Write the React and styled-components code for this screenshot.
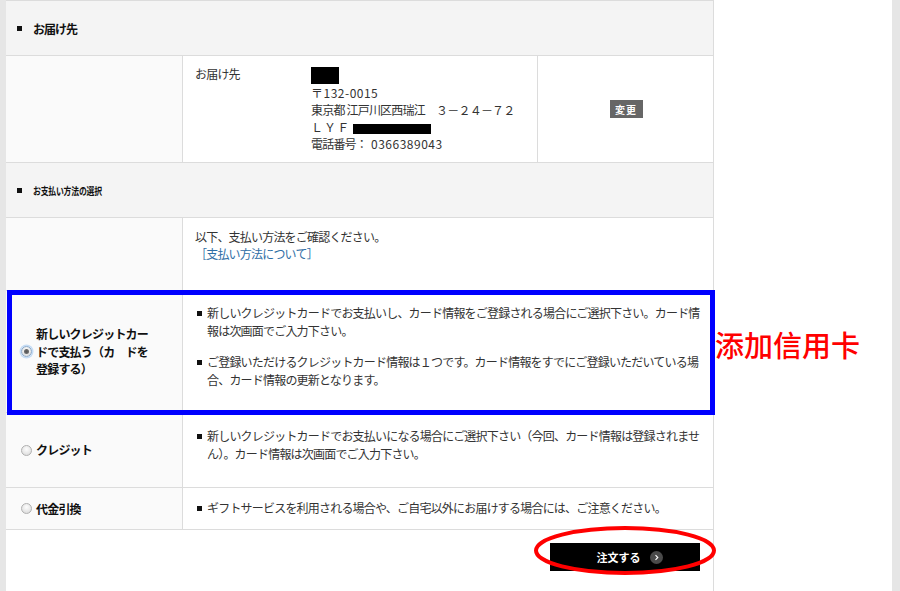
import React from "react";
import styled, { createGlobalStyle } from "styled-components";

const GlobalStyle = createGlobalStyle`
  *, *::before, *::after { box-sizing: border-box; }
  html, body { margin: 0; padding: 0; background: #fff; }
  body {
    font-family: "Noto Sans CJK JP", "Noto Sans", sans-serif;
    color: #333;
    font-size: 12px;
  }
`;

const Page = styled.div`
  display: flex;
  width: 900px;
  height: 591px;
  overflow: hidden;
  background: #fff;
`;

const SideStripe = styled.div`
  flex: 0 0 ${(p) => p.$w}px;
  background: #e6e6e6;
`;

const Gutter = styled.div`
  flex: 1;
  background: #fff;
`;

const Main = styled.main`
  flex: 0 0 708px;
  border-top: 1px solid #dcdcdc;
  border-right: 1px solid #dcdcdc;
  display: flex;
  flex-direction: column;
`;

const SectionHeader = styled.div`
  height: 55px;
  background: #f4f4f4;
  border-bottom: 1px solid #dcdcdc;
  display: flex;
  align-items: center;
  padding-left: 11px;
  gap: 11px;
`;

const Square = styled.span`
  flex: 0 0 5px;
  width: 5px;
  height: 5px;
  background: #111;
`;

const HeaderTitle = styled.span`
  display: inline-block;
  font-weight: bold;
  color: #111;
  font-size: ${(p) => (p.$compact ? 10.5 : 12)}px;
  letter-spacing: ${(p) => (p.$compact ? -0.3 : -1)}px;
  transform: ${(p) => (p.$compact ? "scaleX(0.75)" : "none")};
  transform-origin: left center;
`;

const Row = styled.div`
  position: relative;
  display: grid;
  grid-template-columns: ${(p) => p.$cols || "177px 1fr"};
  height: ${(p) => p.$h}px;
  border-bottom: 1px solid #dcdcdc;

  ${(p) =>
    p.$highlight &&
    `
    &::after {
      content: "";
      position: absolute;
      top: -1px;
      left: 1px;
      right: -2px;
      bottom: -3px;
      border: 5px solid #0000ff;
      z-index: 2;
      pointer-events: none;
    }
  `}
`;

const LabelCell = styled.div`
  background: #fafafa;
  border-right: 1px solid #dcdcdc;
  display: flex;
  align-items: center;
  padding-left: 15px;
`;

const ContentCell = styled.div`
  background: #fff;
  padding: ${(p) => p.$pt || 0}px 9px 0 12px;
  letter-spacing: -0.8px;
  line-height: ${(p) => p.$lh || 18}px;
  color: #333;
  ${(p) => p.$divider && "border-right: 1px solid #dcdcdc;"}
`;

const CenterCell = styled.div`
  display: flex;
  align-items: center;
  justify-content: center;
  background: #fff;
`;

const AddressGrid = styled.div`
  display: grid;
  grid-template-columns: 116px 1fr;
`;

const AddressLines = styled.div`
  display: flex;
  flex-direction: column;
`;

const Latin = styled.span`
  letter-spacing: 0.5px;
  margin-left: ${(p) => p.$ml || 0}px;
`;

const Redact = styled.span`
  display: inline-block;
  width: ${(p) => p.$w}px;
  height: ${(p) => p.$h}px;
  background: #000;
  vertical-align: middle;
  margin-left: ${(p) => p.$ml || 0}px;
`;

const SmallButton = styled.span`
  display: inline-flex;
  align-items: center;
  justify-content: center;
  width: 33px;
  height: 18px;
  background: #666;
  color: #fff;
  font-size: 10px;
  font-weight: bold;
  letter-spacing: 1px;
  margin-left: 1px;
`;

const Link = styled.a`
  color: #2f6ea5;
  text-decoration: none;
`;

const Radio = styled.span`
  position: relative;
  flex: 0 0 11px;
  width: 11px;
  height: 11px;
  border-radius: 50%;
  border: 1px solid ${(p) => (p.$checked ? "#8aa9c9" : "#b0b0b0")};
  background: radial-gradient(circle at 50% 35%, #fdfdfd 0%, #d6d6d6 100%);
  margin-right: 4px;
  box-shadow: ${(p) => (p.$checked ? "0 0 0 1.5px #c5dcf5" : "none")};

  &::after {
    content: "";
    display: ${(p) => (p.$checked ? "block" : "none")};
    position: absolute;
    inset: 2px;
    border-radius: 50%;
    background: radial-gradient(circle, #555 0%, #777 100%);
  }
`;

const OptionLabel = styled.span`
  width: ${(p) => (p.$wrap ? "118px" : "auto")};
  font-weight: bold;
  color: #111;
  font-size: 12px;
  letter-spacing: -0.8px;
  line-height: 17.5px;
`;

const BulletList = styled.ul`
  list-style: none;
  margin: 0;
  padding: 0;
  display: flex;
  flex-direction: column;
  gap: 13px;
`;

const BulletItem = styled.li`
  display: grid;
  grid-template-columns: 12px 1fr;
`;

const ItemBullet = styled.span`
  width: 5px;
  height: 5px;
  margin: 6.5px 0 0 2px;
  background: #111;
`;

const Annotation = styled.span`
  position: absolute;
  left: calc(100% + 2px);
  top: 39px;
  white-space: nowrap;
  font-family: "Noto Sans CJK SC", sans-serif;
  font-size: 29px;
  line-height: 29px;
  font-weight: 500;
  color: #ff0000;
  z-index: 3;
`;

const ButtonRow = styled.div`
  display: flex;
  justify-content: flex-end;
  padding: 13px 13px 0 0;
`;

const OrderButtonWrap = styled.div`
  position: relative;
`;

const OrderButton = styled.button`
  width: 150px;
  height: 28px;
  border: none;
  background: #000;
  color: #fff;
  font-family: "Noto Sans CJK JP", sans-serif;
  font-size: 11px;
  font-weight: bold;
  display: flex;
  align-items: center;
  justify-content: center;
  gap: 9px;
  padding: 0 0 0 9px;
  cursor: pointer;
`;

const ArrowCircle = styled.span`
  width: 13px;
  height: 13px;
  border-radius: 50%;
  background: #4a4a4a;
  display: inline-flex;
  align-items: center;
  justify-content: center;
`;

const Ellipse = styled.svg`
  position: absolute;
  left: -17px;
  top: -18px;
  pointer-events: none;
  overflow: visible;
`;

const payments = [
  {
    label: "新しいクレジットカードで支払う（カ　ドを登録する）",
    checked: true,
    wrap: true,
    highlight: true,
    h: 122,
    pt: 13,
    items: [
      "新しいクレジットカードでお支払いし、カード情報をご登録される場合にご選択下さい。カード情報は次画面でご入力下さい。",
      "ご登録いただけるクレジットカード情報は１つです。カード情報をすでにご登録いただいている場合、カード情報の更新となります。",
    ],
  },
  {
    label: "クレジット",
    h: 75,
    pt: 14,
    items: [
      "新しいクレジットカードでお支払いになる場合にご選択下さい（今回、カード情報は登録されません）。カード情報は次画面でご入力下さい。",
    ],
  },
  {
    label: "代金引換",
    h: 42,
    pt: 11,
    items: ["ギフトサービスを利用される場合や、ご自宅以外にお届けする場合には、ご注意ください。"],
  },
];

export default function App() {
  return (
    <>
      <GlobalStyle />
      <Page>
        <SideStripe $w={6} />
        <Main>
          <SectionHeader>
            <Square />
            <HeaderTitle>お届け先</HeaderTitle>
          </SectionHeader>

          <Row $h={107} $cols="177px 355px 1fr">
            <LabelCell />
            <ContentCell $pt={9} $lh={17} $divider>
              <AddressGrid>
                <span>お届け先</span>
                <AddressLines>
                  <span>
                    <Redact $w={28} $h={17} />
                  </span>
                  <Latin>〒132-0015</Latin>
                  <span>東京都 江戸川区西瑞江　３－２４－７２</span>
                  <span>
                    Ｌ Ｙ Ｆ
                    <Redact $w={78} $h={10} $ml={5} />
                  </span>
                  <span>
                    電話番号：<Latin $ml={4}>0366389043</Latin>
                  </span>
                </AddressLines>
              </AddressGrid>
            </ContentCell>
            <CenterCell>
              <SmallButton>変更</SmallButton>
            </CenterCell>
          </Row>

          <SectionHeader>
            <Square />
            <HeaderTitle $compact>お支払い方法の選択</HeaderTitle>
          </SectionHeader>

          <Row $h={73}>
            <LabelCell />
            <ContentCell $pt={10} $lh={17}>
              <div>以下、支払い方法をご確認ください。</div>
              <Link href="#">［支払い方法について］</Link>
            </ContentCell>
          </Row>

          {payments.map((p) => (
            <Row key={p.label} $h={p.h} $highlight={p.highlight}>
              <LabelCell>
                <Radio $checked={p.checked} />
                <OptionLabel $wrap={p.wrap}>{p.label}</OptionLabel>
              </LabelCell>
              <ContentCell $pt={p.pt}>
                <BulletList>
                  {p.items.map((t) => (
                    <BulletItem key={t}>
                      <ItemBullet />
                      <span>{t}</span>
                    </BulletItem>
                  ))}
                </BulletList>
              </ContentCell>
              {p.highlight && <Annotation>添加信用卡</Annotation>}
            </Row>
          ))}

          <ButtonRow>
            <OrderButtonWrap>
              <OrderButton>
                <span>注文する</span>
                <ArrowCircle>
                  <svg width="7" height="7" viewBox="0 0 7 7">
                    <path d="M2.5 1.2 L4.8 3.5 L2.5 5.8" fill="none" stroke="#fff" strokeWidth="1.1" />
                  </svg>
                </ArrowCircle>
              </OrderButton>
              <Ellipse width="184" height="52" viewBox="0 0 184 52">
                <ellipse cx="92" cy="25.5" rx="89" ry="22.5" fill="none" stroke="#ff0000" strokeWidth="4" />
              </Ellipse>
            </OrderButtonWrap>
          </ButtonRow>
        </Main>
        <Gutter />
        <SideStripe $w={8} />
      </Page>
    </>
  );
}
